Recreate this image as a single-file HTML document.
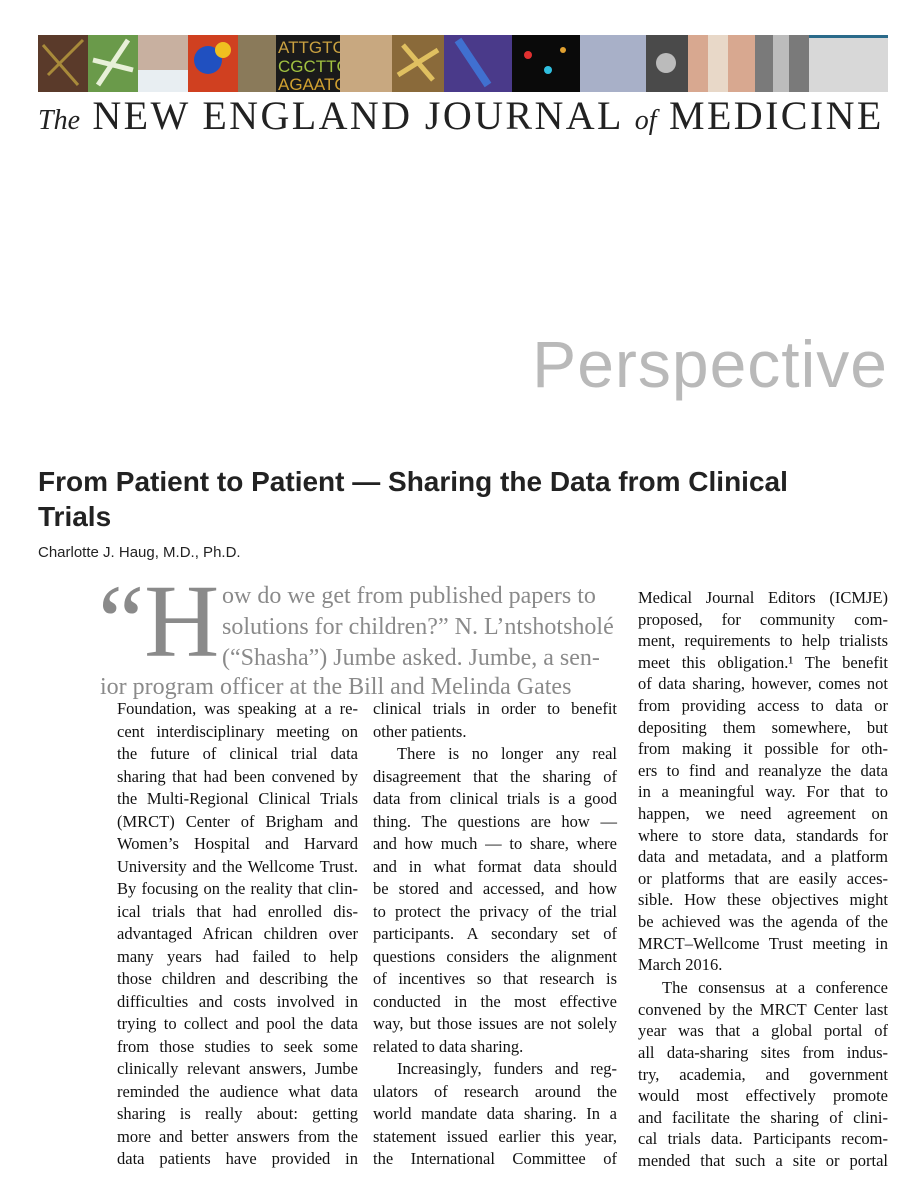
<!DOCTYPE html>
<html><head><meta charset="utf-8"><style>
*{margin:0;padding:0;box-sizing:border-box}
body{width:914px;height:1200px;background:#fff;position:relative;overflow:hidden;font-family:"Liberation Serif",serif;color:#222}
.ban{position:absolute;top:35px;height:57px;}
.title{position:absolute;left:38px;top:92px;font-size:40px;letter-spacing:2.4px;color:#222;white-space:nowrap;font-family:"Liberation Serif",serif}
.title i{font-size:28px;letter-spacing:0}
.persp{position:absolute;right:26px;top:326px;font-family:"Liberation Sans",sans-serif;font-size:66px;color:#b9b9b9;letter-spacing:1px}
.h1{position:absolute;left:38px;top:464px;width:820px;font-family:"Liberation Sans",sans-serif;font-weight:bold;font-size:28px;line-height:35px;color:#222}
.auth{position:absolute;left:38px;top:544px;font-family:"Liberation Sans",sans-serif;font-size:15px;color:#222}
.q{position:absolute;color:#8a8a8a;font-size:24px;line-height:30px;white-space:nowrap}
.col{position:absolute;font-size:16.5px;color:#111}
.col div{text-align:justify;text-align-last:justify;white-space:nowrap;overflow:visible}
.col div.e{text-align-last:left}
.col div.i{padding-left:24px}
.c12 div{height:22.5px;line-height:22.5px}
.c3 div{height:21.6px;line-height:21.6px}
</style></head><body>
<svg class="ban" style="left:38px" width="850" height="57">
<rect x="0" y="0" width="50" height="57" fill="#5a3a2a"/><path d="M5 10 L40 50 M10 40 L45 5" stroke="#a88a3a" stroke-width="3"/>
<rect x="50" y="0" width="50" height="57" fill="#6a9a4a"/><path d="M60 50 L90 5 M55 25 L95 35" stroke="#e8f0d8" stroke-width="5"/>
<rect x="100" y="0" width="50" height="57" fill="#c8b0a0"/><rect x="100" y="35" width="50" height="22" fill="#e8eef2"/>
<rect x="150" y="0" width="50" height="57" fill="#d04020"/><circle cx="170" cy="25" r="14" fill="#2050c0"/><circle cx="185" cy="15" r="8" fill="#f0c020"/>
<rect x="200" y="0" width="38" height="57" fill="#8a7a5a"/>
<rect x="238" y="0" width="64" height="57" fill="#1a1a1a"/>
<text x="240" y="18" font-size="17" fill="#c8a040" font-family="Liberation Sans">ATTGTC</text><text x="240" y="37" font-size="17" fill="#a0c040" font-family="Liberation Sans">CGCTTG</text><text x="240" y="55" font-size="17" fill="#d0a030" font-family="Liberation Sans">AGAATC</text>
<rect x="302" y="0" width="52" height="57" fill="#c8a880"/>
<rect x="354" y="0" width="52" height="57" fill="#8a6a3a"/><path d="M365 10 L395 45 M360 40 L400 15" stroke="#e0c060" stroke-width="5"/>
<rect x="406" y="0" width="68" height="57" fill="#4a3a8a"/><path d="M420 5 L450 50" stroke="#4070d0" stroke-width="8"/>
<rect x="474" y="0" width="68" height="57" fill="#0a0a0a"/><circle cx="490" cy="20" r="4" fill="#e03030"/><circle cx="510" cy="35" r="4" fill="#30c0e0"/><circle cx="525" cy="15" r="3" fill="#e0a030"/>
<rect x="542" y="0" width="66" height="57" fill="#a8b0c8"/>
<rect x="608" y="0" width="42" height="57" fill="#4a4a4a"/><circle cx="628" cy="28" r="10" fill="#bbb"/>
<rect x="650" y="0" width="67" height="57" fill="#d8a890"/><rect x="670" y="0" width="20" height="57" fill="#e8d8c8"/>
<rect x="717" y="0" width="54" height="57" fill="#7a7a7a"/><rect x="735" y="0" width="16" height="57" fill="#bcbcbc"/>
<rect x="771" y="0" width="79" height="57" fill="#d8d8d8"/><rect x="771" y="0" width="79" height="3" fill="#2a6a8a"/>
</svg>
<div class="title"><i>The</i> NEW ENGLAND JOURNAL <i>of</i> MEDICINE</div>
<div class="persp">Perspective</div>
<div class="h1">From Patient to Patient — Sharing the Data from Clinical Trials</div>
<div class="auth">Charlotte J. Haug, M.D., Ph.D.</div>
<div class="q" style="left:98px;top:572px;font-size:104px;line-height:100px">“H</div>
<div class="q" style="left:222px;top:581px">ow do we get from published papers to</div>
<div class="q" style="left:222px;top:612px">solutions for children?” N. L’ntshotsholé</div>
<div class="q" style="left:222px;top:643px">(“Shasha”) Jumbe asked. Jumbe, a sen-</div>
<div class="q" style="left:100px;top:672px">ior program officer at the Bill and Melinda Gates</div>
<div class="col c12" style="left:117px;top:698px;width:241px">
<div>Foundation, was speaking at a re-</div><div>cent interdisciplinary meeting on</div><div>the future of clinical trial data</div><div>sharing that had been convened by</div><div>the Multi-Regional Clinical Trials</div><div>(MRCT) Center of Brigham and</div><div>Women’s Hospital and Harvard</div><div>University and the Wellcome Trust.</div><div>By focusing on the reality that clin-</div><div>ical trials that had enrolled dis-</div><div>advantaged African children over</div><div>many years had failed to help</div><div>those children and describing the</div><div>difficulties and costs involved in</div><div>trying to collect and pool the data</div><div>from those studies to seek some</div><div>clinically relevant answers, Jumbe</div><div>reminded the audience what data</div><div>sharing is really about: getting</div><div>more and better answers from the</div><div>data patients have provided in</div>
</div>
<div class="col c12" style="left:373px;top:698px;width:244px">
<div>clinical trials in order to benefit</div><div class="e">other patients.</div><div class="i">There is no longer any real</div><div>disagreement that the sharing of</div><div>data from clinical trials is a good</div><div>thing. The questions are how —</div><div>and how much — to share, where</div><div>and in what format data should</div><div>be stored and accessed, and how</div><div>to protect the privacy of the trial</div><div>participants. A secondary set of</div><div>questions considers the alignment</div><div>of incentives so that research is</div><div>conducted in the most effective</div><div>way, but those issues are not solely</div><div class="e">related to data sharing.</div><div class="i">Increasingly, funders and reg-</div><div>ulators of research around the</div><div>world mandate data sharing. In a</div><div>statement issued earlier this year,</div><div>the International Committee of</div>
</div>
<div class="col c3" style="left:638px;top:587px;width:250px">
<div>Medical Journal Editors (ICMJE)</div><div>proposed, for community com-</div><div>ment, requirements to help trialists</div><div>meet this obligation.¹ The benefit</div><div>of data sharing, however, comes not</div><div>from providing access to data or</div><div>depositing them somewhere, but</div><div>from making it possible for oth-</div><div>ers to find and reanalyze the data</div><div>in a meaningful way. For that to</div><div>happen, we need agreement on</div><div>where to store data, standards for</div><div>data and metadata, and a platform</div><div>or platforms that are easily acces-</div><div>sible. How these objectives might</div><div>be achieved was the agenda of the</div><div>MRCT–Wellcome Trust meeting in</div><div class="e">March 2016.</div><div style="height:1.5px"></div><div class="i">The consensus at a conference</div><div>convened by the MRCT Center last</div><div>year was that a global portal of</div><div>all data-sharing sites from indus-</div><div>try, academia, and government</div><div>would most effectively promote</div><div>and facilitate the sharing of clini-</div><div>cal trials data. Participants recom-</div><div>mended that such a site or portal</div>
</div>
</body></html>
